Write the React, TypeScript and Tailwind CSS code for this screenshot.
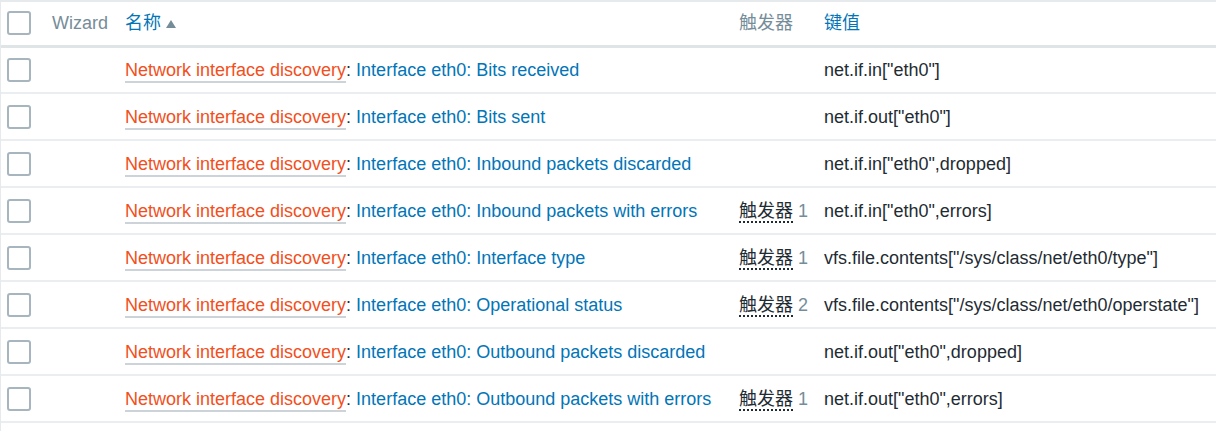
import React from 'react'

const rows = [
  { name: 'Interface eth0: Bits received', triggers: 0, key: 'net.if.in["eth0"]' },
  { name: 'Interface eth0: Bits sent', triggers: 0, key: 'net.if.out["eth0"]' },
  { name: 'Interface eth0: Inbound packets discarded', triggers: 0, key: 'net.if.in["eth0",dropped]' },
  { name: 'Interface eth0: Inbound packets with errors', triggers: 1, key: 'net.if.in["eth0",errors]' },
  { name: 'Interface eth0: Interface type', triggers: 1, key: 'vfs.file.contents["/sys/class/net/eth0/type"]' },
  { name: 'Interface eth0: Operational status', triggers: 2, key: 'vfs.file.contents["/sys/class/net/eth0/operstate"]' },
  { name: 'Interface eth0: Outbound packets discarded', triggers: 0, key: 'net.if.out["eth0",dropped]' },
  { name: 'Interface eth0: Outbound packets with errors', triggers: 1, key: 'net.if.out["eth0",errors]' },
]

function Checkbox() {
  return <div className="w-[24px] h-[24px] border-2 border-[#a7b5be] rounded-[3px] bg-white" />
}

export default function App() {
  return (
    <div
      className="w-[1216px] h-[431px] bg-white border-l border-[#e6eaed] overflow-hidden text-[18px] text-[#1f2c33]"
      style={{ fontFamily: '"Liberation Sans", Arial, "Noto Sans CJK SC", sans-serif' }}
    >
      <table className="w-full border-collapse table-fixed">
        <colgroup>
          <col className="w-[44px]" />
          <col className="w-[73px]" />
          <col className="w-[614px]" />
          <col className="w-[85px]" />
          <col />
        </colgroup>
        <thead>
          <tr className="h-[45px] border-t-2 border-b-[3px] border-t-[#e6eaed] border-b-[#dfe4e7]">
            <th className="pl-[6px] align-middle">
              <Checkbox />
            </th>
            <th className="pl-[7px] text-left font-normal text-[#768d99]">Wizard</th>
            <th className="pl-[7px] text-left font-normal">
              <span className="inline-flex items-center text-[#0275b8]">
                名称
                <svg width="12" height="10" viewBox="0 0 12 10" className="ml-[4px] mt-[1px]">
                  <path d="M1 9 L6 1 L11 9 Z" fill="#768d99" />
                </svg>
              </span>
            </th>
            <th className="pl-[7px] text-left font-normal text-[#768d99]">触发器</th>
            <th className="pl-[7px] text-left font-normal text-[#0275b8]">键值</th>
          </tr>
        </thead>
        <tbody>
          {rows.map((r, i) => (
            <tr key={i} className="h-[47px] border-b-2 border-[#ebeef0]">
              <td className="pl-[6px] align-middle">
                <Checkbox />
              </td>
              <td />
              <td className="pl-[7px] pt-[2px] whitespace-nowrap">
                <span className="text-[#f24f1d] border-b-2 border-[#cdd4d9] pb-[1px]">
                  Network interface discovery
                </span>
                <span>: </span>
                <span className="text-[#0275b8]">{r.name}</span>
              </td>
              <td className="pl-[7px] pt-[2px] whitespace-nowrap">
                {r.triggers > 0 && (
                  <>
                    <span className="border-b-2 border-dotted border-[#1f2c33]">触发器</span>
                    <span className="ml-[5px] text-[#768d99]">{r.triggers}</span>
                  </>
                )}
              </td>
              <td className="pl-[7px] pt-[2px] whitespace-nowrap">{r.key}</td>
            </tr>
          ))}
        </tbody>
      </table>
    </div>
  )
}
